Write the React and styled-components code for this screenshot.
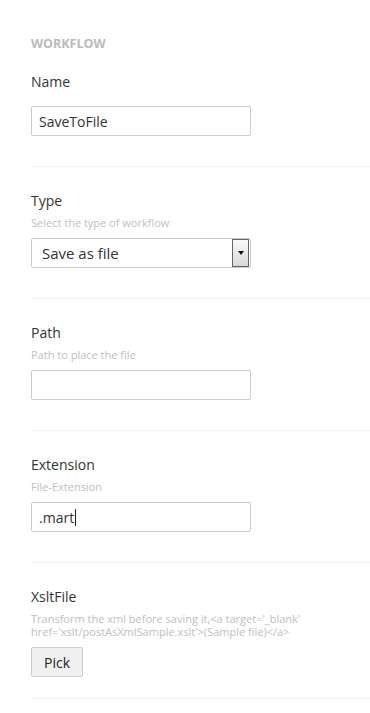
import styled, { createGlobalStyle } from 'styled-components';

const GlobalStyle = createGlobalStyle`
	html, body {
		margin: 0;
		padding: 0;
		background: #fff;
	}
	body {
		font-family: "Open Sans", "Liberation Sans", sans-serif;
		color: #333;
	}
`;

const Page = styled.div`
	display: flex;
	flex-direction: column;
	padding: 36px 0 0 31px;
`;

const Heading = styled.h3`
	margin: 0 0 21px;
	font-size: 12.5px;
	line-height: 15px;
	font-weight: 700;
	color: #bbb;
`;

const Section = styled.div`
	display: flex;
	flex-direction: column;
	align-items: flex-start;
	padding: ${({ $first }) => ($first ? '0' : '24px')} 0 ${({ $bottom }) => $bottom || 30}px;
	border-bottom: 1px solid #f0f0f0;
`;

const Label = styled.label`
	font-size: 14px;
	line-height: 20px;
	color: #333;
	margin-bottom: 5px;
`;

const Hint = styled.div`
	font-size: 11px;
	line-height: 13px;
	color: #c0c0c0;
	max-width: 330px;
`;

const TextBox = styled.div`
	box-sizing: border-box;
	display: flex;
	align-items: center;
	width: 220px;
	height: 30px;
	margin-top: 9px;
	padding: 0 7px;
	border: 1px solid #ccc;
	border-radius: 2px;
	font-size: 14px;
	color: #333;
	background: #fff;
`;

const Caret = styled.span`
	display: inline-block;
	width: 1px;
	height: 17px;
	margin-left: 1px;
	background: #222;
`;

const SelectBox = styled.div`
	box-sizing: border-box;
	display: flex;
	align-items: center;
	justify-content: space-between;
	width: 220px;
	height: 30px;
	margin-top: 9px;
	padding: 0 1px 0 10px;
	border: 1px solid #ccc;
	border-radius: 2px;
	font-size: 15px;
	color: #333;
`;

const SelectArrow = styled.span`
	box-sizing: border-box;
	display: flex;
	align-items: center;
	justify-content: center;
	width: 17px;
	height: 28px;
	border: 1px solid #666;
	background: linear-gradient(#fafafa, #d8d8d8);

	&::after {
		content: '';
		border-left: 3px solid transparent;
		border-right: 3px solid transparent;
		border-top: 4px solid #111;
	}
`;

const PickButton = styled.button`
	box-sizing: border-box;
	width: 52px;
	height: 30px;
	margin-top: 9px;
	border: 1px solid #ccc;
	border-radius: 2px;
	background: #f0f0f0;
	font-family: inherit;
	font-size: 14px;
	color: #222;
	padding: 0;
`;

export default function App() {
	return (
		<>
			<GlobalStyle />
			<Page>
				<Heading>WORKFLOW</Heading>
				<Section $first>
					<Label>Name</Label>
					<TextBox>SaveToFile</TextBox>
				</Section>
				<Section>
					<Label>Type</Label>
					<Hint>Select the type of workflow</Hint>
					<SelectBox>
						<span>Save as file</span>
						<SelectArrow />
					</SelectBox>
				</Section>
				<Section>
					<Label>Path</Label>
					<Hint>Path to place the file</Hint>
					<TextBox />
				</Section>
				<Section>
					<Label>Extension</Label>
					<Hint>File-Extension</Hint>
					<TextBox>
						.mart<Caret />
					</TextBox>
				</Section>
				<Section $bottom={21}>
					<Label>XsltFile</Label>
					<Hint>
						Transform the xml before saving it,&lt;a target='_blank'
						href='xslt/postAsXmlSample.xslt'&gt;(Sample file)&lt;/a&gt;
					</Hint>
					<PickButton>Pick</PickButton>
				</Section>
			</Page>
		</>
	);
}
